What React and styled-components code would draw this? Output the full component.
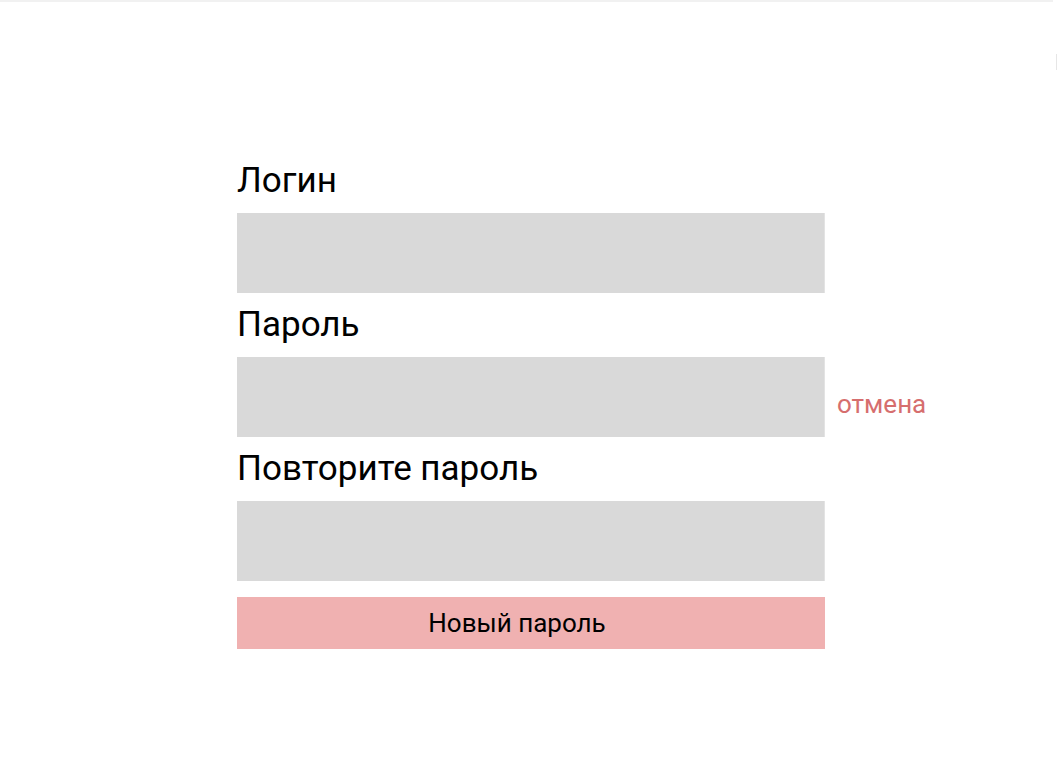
import React from "react";
import styled, { createGlobalStyle } from "styled-components";

const GlobalStyle = createGlobalStyle`
  html, body {
    margin: 0;
    padding: 0;
    background: #fff;
  }
  body {
    font-family: Roboto, "Liberation Sans", sans-serif;
    color: #000;
  }
`;

export default function App() {
  return (
    <>
      <GlobalStyle />
      <Page>
        <TopLine />
        <Wrapper>
          <Form onSubmit={(e) => e.preventDefault()}>
            <Label htmlFor="login">Логин</Label>
            <Row>
              <Field id="login" type="text" />
            </Row>
            <Label htmlFor="password">Пароль</Label>
            <Row>
              <Field id="password" type="password" />
              <Cancel href="#">отмена</Cancel>
            </Row>
            <Label htmlFor="repeat">Повторите пароль</Label>
            <Row>
              <Field id="repeat" type="password" />
            </Row>
            <Submit type="submit">Новый пароль</Submit>
          </Form>
        </Wrapper>
        <ScrollMark />
      </Page>
    </>
  );
}

const Page = styled.div`
  position: relative;
  width: 100%;
  min-height: 761px;
  overflow: hidden;
`;

const TopLine = styled.div`
  height: 2px;
  width: 1053px;
  background: #f1f1f1;
`;

const ScrollMark = styled.div`
  position: absolute;
  top: 54px;
  right: 2px;
  width: 1px;
  height: 16px;
  background: #e6e6e6;
`;

const Wrapper = styled.div`
  display: flex;
  justify-content: center;
  padding-left: 3px;
  padding-top: 158px;
`;

const Form = styled.form`
  width: 588px;
  display: flex;
  flex-direction: column;
`;

const Label = styled.label`
  font-size: 35px;
  line-height: 41px;
  margin: 11px 0 12px;
  &:first-child {
    margin-top: 0;
  }
`;

const Row = styled.div`
  display: flex;
  align-items: center;
`;

const Field = styled.input`
  flex: 0 0 588px;
  height: 80px;
  box-sizing: border-box;
  border: none;
  border-right: 1px solid #e3e3e3;
  background: #d9d9d9;
  outline: none;
  padding: 0 16px;
  font-family: inherit;
  font-size: 24px;
`;

const Cancel = styled.a`
  width: 0;
  margin-left: 12px;
  white-space: nowrap;
  font-size: 26px;
  color: #d66e6e;
  text-decoration: none;
  margin-top: 14px;
`;

const Submit = styled.button`
  margin-top: 16px;
  height: 52px;
  border: none;
  background: #f0b1b1;
  font-family: inherit;
  font-size: 26px;
  color: #000;
  padding: 0 28px 0 0;
  cursor: pointer;
`;
